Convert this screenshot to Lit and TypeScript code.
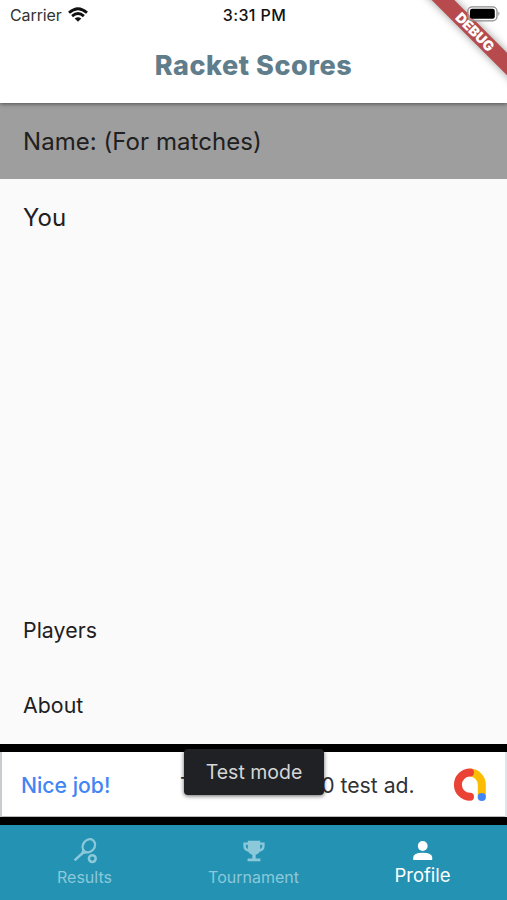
import { LitElement, html, css, svg } from "lit";
import { customElement } from "lit/decorators.js";

const wifi = html`<svg width="20" height="16" viewBox="0 0 20 16" fill="none" stroke="#111" stroke-width="2.8">
  <path d="M1 5.8 Q10 -2.4 19 5.8" />
  <path d="M4.1 9.1 Q10 3.9 15.9 9.1" />
  <path d="M10 14.8 L6.7 11.6 Q10 8.9 13.3 11.6 Z" fill="#111" stroke="none" />
</svg>`;

const battery = html`<svg width="34" height="16" viewBox="0 0 34 16">
  <rect x="0.8" y="0.8" width="29.2" height="14" rx="4.4" fill="#fff" fill-opacity=".35" stroke="#8c8c8c" stroke-width="1.3" />
  <rect x="3" y="2.8" width="24.8" height="10" rx="2.2" fill="#000" />
  <path d="M31.4 5.6 Q33.6 7.8 31.4 10 Z" fill="#8c8c8c" />
</svg>`;

const racket = svg`<g fill="none" stroke="currentColor" stroke-width="2.2">
  <ellipse cx="16.8" cy="7.8" rx="5.8" ry="7" transform="rotate(38 16.8 7.8)" />
  <path d="M11.4 11.6 Q11.4 15.6 8.6 16.8 L2.6 22.4" stroke-width="2.5" />
  <path d="M8.6 16.8 Q11 14.3 15 14.6" stroke-width="1.8" />
  <circle cx="20.3" cy="20.6" r="3.4" stroke-width="2.5" />
</g>`;
const trophy = svg`<path fill="currentColor" fill-rule="evenodd" d="M6.8 2.8 H19.2 V4.4 H23.6 V8.6 Q23.3 12.8 18.8 13.7 Q17.2 16.1 14.7 16.8 V20.6 H19.4 V23.2 H6.6 V20.6 H11.3 V16.8 Q8.8 16.1 7.2 13.7 Q2.7 12.8 2.4 8.6 V4.4 H6.8 Z M4.8 6.8 V8.5 Q4.9 10.3 6.8 11.1 V6.8 Z M19.2 6.8 V11.1 Q21.1 10.3 21.2 8.5 V6.8 Z" />`;
const person = svg`<g fill="currentColor"><circle cx="12.7" cy="8" r="4.9" /><path d="M3.2 22 V19.5 Q3.2 14.8 12.7 14.8 Q22.2 14.8 22.2 19.5 V22 Z" /></g>`;

@customElement("app-root")
export class AppRoot extends LitElement {
  static styles = css`
    :host {
      display: flex;
      flex-direction: column;
      position: relative;
      width: 507px;
      height: 900px;
      overflow: hidden;
      background: #fafafa;
      color: #202020;
      font-family: Inter, "Liberation Sans", sans-serif;
      white-space: nowrap;
    }
    header {
      height: 103px;
      background: #fff;
      box-shadow: 0 1px 4px rgba(0, 0, 0, 0.5);
      z-index: 1;
    }
    .status {
      display: grid;
      grid-template-columns: 1fr auto 1fr;
      height: 30px;
      align-items: center;
      padding: 0 6px 0 10px;
      font-size: 16px;
    }
    .carrier { display: flex; align-items: center; gap: 6px; color: #333; }
    .carrier span { letter-spacing: -0.1px; }
    .time { font-weight: 500; font-size: 16px; letter-spacing: 0.4px; color: #111; margin-right: 2px; }
    .battery { justify-self: end; display: flex; z-index: 3; margin-top: -2px; }
    h1 {
      margin: 0;
      height: 71px;
      line-height: 71px;
      text-align: center;
      font-size: 27px;
      font-weight: 800;
      letter-spacing: 0.55px;
      color: #607d8b;
    }
    .debug {
      position: absolute;
      z-index: 2;
      left: 375px;
      top: 24px;
      width: 200px;
      height: 16px;
      transform: rotate(45deg);
      background: #b64a4c;
      box-shadow: 0 0 8px rgba(0, 0, 0, 0.4);
      color: #fff;
      text-align: center;
      font-size: 13.8px;
      line-height: 17px;
      font-weight: 900;
    }
    .row { height: 76px; line-height: 77px; padding-left: 23px; font-size: 24px; letter-spacing: 0.05px; }
    .label { background: #9e9e9e; }
    .spacer { flex: 1; }
    .small { height: 75px; line-height: 73px; font-size: 21.3px; }
    .ad {
      display: flex;
      align-items: center;
      position: relative;
      box-sizing: border-box;
      height: 81px;
      border: solid #000;
      border-width: 8px 0;
      background: #fff;
      box-shadow: inset 2px 0 #c9ccce, inset -2px 0 #dce6ed, inset 0 -1px #bbb;
      padding: 0 20px 0 21px;
      font-size: 21.2px;
      color: #303134;
    }
    .nice { width: 159px; color: #4285f4; font-weight: 500; }
    .copy { flex: 1; }
    .lead { letter-spacing: -0.75px; }
    .mode {
      position: absolute;
      left: 184px;
      top: -3px;
      width: 140px;
      height: 46px;
      line-height: 47px;
      border-radius: 4px;
      background: #202124;
      color: #d5d6d8;
      text-align: center;
      font-size: 19.5px;
      box-shadow: 0 1px 4px rgba(0, 0, 0, 0.6);
    }
    nav {
      display: grid;
      grid-template-columns: repeat(3, 1fr);
      height: 75px;
      background: #2492b2;
    }
    .tab {
      display: flex;
      flex-direction: column;
      align-items: center;
      padding-top: 13px;
      color: #8bc9da;
      font-size: 16px;
      line-height: 22px;
    }
    .tab svg { display: block; margin-bottom: 2px; }
    .active { color: #fff; font-size: 18.5px; }
    .active svg { margin-bottom: 0; }
  `;

  private tab(name: string, icon: unknown, active = false) {
    return html`<div class="tab ${active ? "active" : ""}">
      <svg width="26" height="26" viewBox="0 0 26 26">${icon}</svg><span>${name}</span>
    </div>`;
  }

  render() {
    return html`
      <header>
        <div class="status">
          <div class="carrier"><span>Carrier</span>${wifi}</div>
          <div class="time">3:31 PM</div>
          <div class="battery">${battery}</div>
        </div>
        <h1>Racket Scores</h1>
        <div class="debug">DEBUG</div>
      </header>
      <div class="row label">Name: (For matches)</div>
      <div class="row">You</div>
      <div class="spacer"></div>
      <div class="row small">Players</div>
      <div class="row small">About</div>
      <section class="ad">
        <span class="nice">Nice job!</span>
        <span class="copy"><span class="lead">This is a 320x5</span>0 test ad.</span>
        <svg width="34" height="34" viewBox="0 0 34 34" fill="none" stroke-width="8">
          <path d="M17 4.6 A12.2 12.2 0 0 1 28.8 16.8 V28" stroke="#fbbc04" />
          <path d="M17 4.6 A12.1 12.1 0 0 0 17 28.8" stroke="#ea4335" stroke-linecap="round" />
          <circle cx="28.8" cy="29" r="4.1" fill="#4285f4" />
        </svg>
        <div class="mode">Test mode</div>
      </section>
      <nav>
        ${this.tab("Results", racket)}
        ${this.tab("Tournament", trophy)}
        ${this.tab("Profile", person, true)}
      </nav>
    `;
  }
}
